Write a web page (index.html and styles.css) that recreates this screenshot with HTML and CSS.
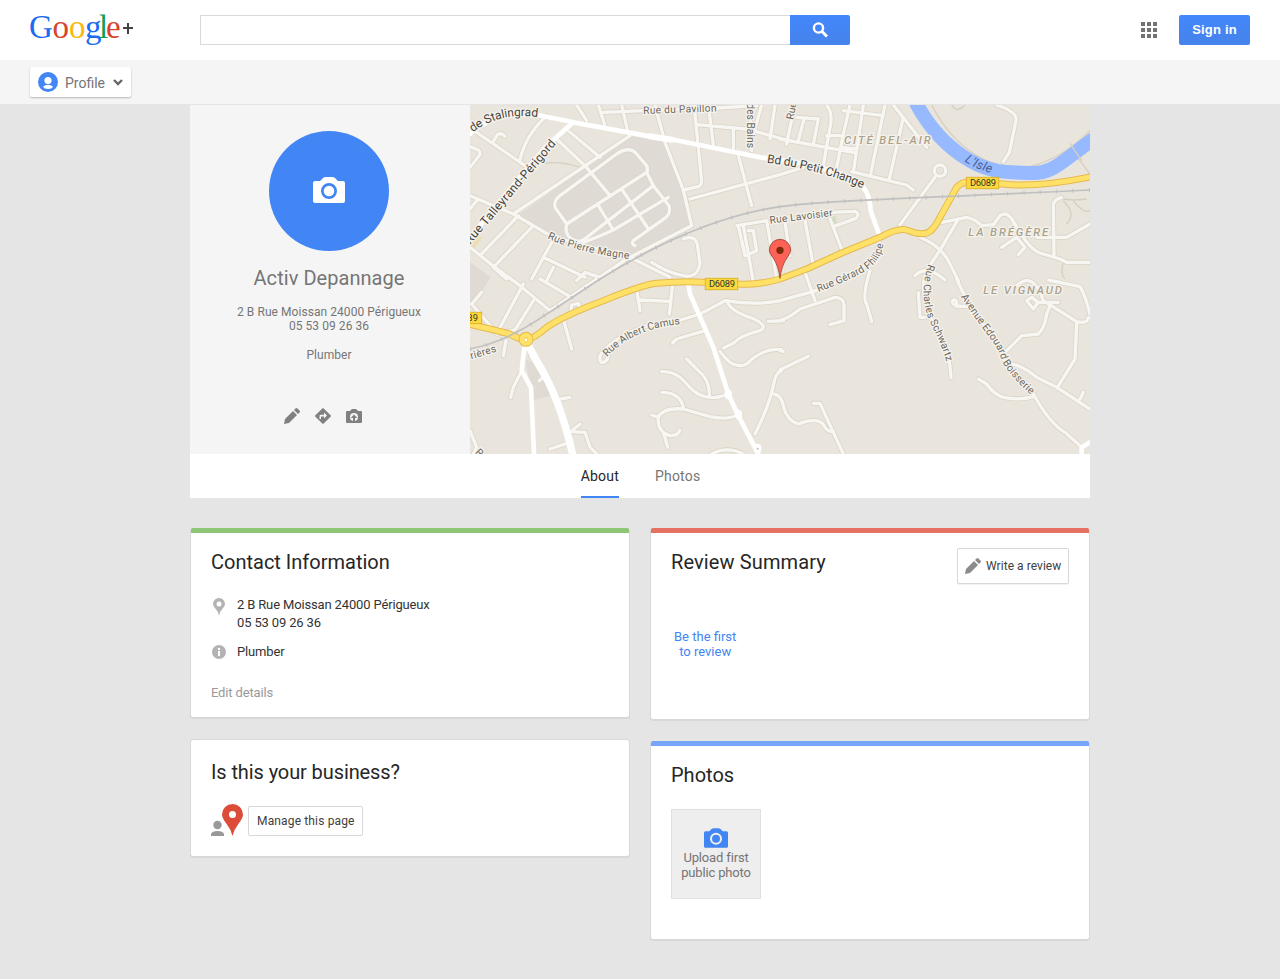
FILE: index.html
```html
<!DOCTYPE html>
<html lang="en">
<head>
    <meta charset="UTF-8">
    <meta name="viewport" content="width=device-width, initial-scale=1.0">
    <title>Activ Depannage - Google+</title>
    <link rel="stylesheet" href="styles.css">
</head>
<body>
    <!-- shared icons -->
    <svg class="sprite" width="0" height="0">
        <symbol id="icon-camera" viewBox="0 0 32 26">
            <path fill-rule="evenodd" d="M2 4h5l3-3q1-1 3-1h6q2 0 3 1l3 3h5q2 0 2 2v18q0 2-2 2H2q-2 0-2-2V6q0-2 2-2zM16 6a8 8 0 1 0 0 16a8 8 0 1 0 0-16zm0 2.7a5.3 5.3 0 1 1 0 10.6a5.3 5.3 0 1 1 0-10.6z"/>
        </symbol>
        <symbol id="icon-pencil" viewBox="0 0 16 16">
            <path d="M0 16l1-5 8-8 4 4-8 8zM10 2l1.500-1.500q1-1 2 0l2 2q1 1 0 2L14 6z"/>
        </symbol>
    </svg>

    <header class="header">
        <a class="logo" href="#">
            <svg width="110" height="46" viewBox="-2 -5 110 46">
                <text y="26"><tspan class="g-blue" x="-1">G</tspan><tspan class="g-red" x="22.500">o</tspan><tspan class="g-yellow" x="39">o</tspan><tspan class="g-blue" x="55">g</tspan><tspan class="g-green" x="69">l</tspan><tspan class="g-red" x="76">e</tspan></text>
                <path d="M97 11h2v4h4v2h-4v5h-2v-5h-4v-2h4z" fill="#444"/>
            </svg>
        </a>
        <form class="search">
            <input type="text" class="search-input" aria-label="Search">
            <button type="button" class="search-button" aria-label="Search">
                <svg width="16" height="16" viewBox="0 0 16 16" fill="none" stroke="#fff">
                    <circle cx="6.500" cy="6" r="4.600" stroke-width="2.400"/>
                    <path d="M10 9.500l5 5" stroke-width="3"/>
                </svg>
            </button>
        </form>
        <div class="header-right">
            <svg width="16" height="16" viewBox="0 0 16 16" fill="#737373">
                <path d="M0 0h4v4H0zM6 0h4v4H6zM12 0h4v4h-4zM0 6h4v4H0zM6 6h4v4H6zM12 6h4v4h-4zM0 12h4v4H0zM6 12h4v4H6zM12 12h4v4h-4z"/>
            </svg>
            <a class="sign-in" href="#">Sign in</a>
        </div>
    </header>

    <nav class="subnav">
        <button type="button" class="profile-menu">
            <svg width="20" height="20" viewBox="0 0 20 20">
                <circle cx="10" cy="10" r="10" fill="#4285f4"/>
                <circle cx="10" cy="8.500" r="3.600" fill="#fff"/>
                <path d="M5 14.500q5-3.500 10 0q-1 2.500-5 2.500t-5-2.500z" fill="#fff"/>
            </svg>
            <span>Profile</span>
            <svg width="10" height="7" viewBox="0 0 10 7"><path d="M1 1l4 4 4-4" fill="none" stroke="#666" stroke-width="2.400"/></svg>
        </button>
    </nav>

    <main class="page">
        <section class="cover">
            <div class="profile">
                <div class="avatar">
                    <svg width="32" height="26"><use href="#icon-camera"/></svg>
                </div>
                <h1>Activ Depannage</h1>
                <p class="address">2 B Rue Moissan 24000 Périgueux<br>05 53 09 26 36</p>
                <p class="category">Plumber</p>
                <div class="actions">
                    <svg width="16" height="16"><use href="#icon-pencil"/></svg>
                    <svg width="16" height="16" viewBox="0 0 16 16">
                        <path fill-rule="evenodd" d="M7.300.4q.7-.7 1.400 0l6.900 6.900q.7.700 0 1.400l-6.900 6.900q-.7.700-1.400 0L.4 8.700q-.7-.7 0-1.400zM6 11V8.500h3v2L12 7.500l-3-3V6.800H5.500Q4.500 6.800 4.500 8V11z"/>
                    </svg>
                    <svg width="16" height="14" viewBox="0 0 16 14">
                        <path fill-rule="evenodd" d="M1 2h3l1.300-1.500Q5.700 0 6.500 0h3q.8 0 1.200.5L12 2h3q1 0 1 1v10q0 1-1 1H1q-1 0-1-1V3q0-1 1-1zM7 12V9H4.700L8 5.500 11.300 9H9v3q3-.7 3-4a4 4 0 0 0-8 0q0 3.300 3 4z"/>
                    </svg>
                </div>
            </div>
            <svg class="map" width="620" height="349" viewBox="0 3 1860 1047">
                <defs>
                    <g id="streets">
                        <path d="M20 85L165 185M0 128L25 138Q35 148 25 158L0 190M70 112L82 92Q95 85 105 97M230 35Q165 95 150 168M260 105L345 185L420 275M295 80L390 160M130 330L480 95M0 275L130 330L250 400L480 460L600 520M20 290L0 315M145 335L30 455M185 370L70 490M0 430L75 490L150 545L240 620L470 465L665 365L640 258L585 115L555 3"/>
                        <path d="M320 3L350 50M385 3L405 65M455 3L475 90M400 25L520 20L740 12L860 5M672 3L685 130L695 232Q695 243 685 248L640 258M715 3L730 122M680 62L830 75L950 108M790 72L790 138M840 3L845 140M875 3L850 92M915 3L900 105M660 285L930 212L1000 190M805 155L845 305"/>
                        <path d="M290 360L255 310Q250 290 270 275L440 150Q480 125 500 150L530 185Q535 198 530 205L290 360M530 205L550 245L597 305Q603 325 588 340L490 410Q482 420 495 425M290 360Q282 390 305 405Q330 420 350 400L550 245M455 255L535 375M385 305L430 378M340 415Q370 405 430 378L595 280"/>
                        <path d="M245 415L185 525M220 460L345 520M250 490L230 530M110 525L70 490M320 530L345 505L390 520M640 405Q675 392 682 420L690 480Q680 525 640 515Q590 505 545 475M800 365L890 350M805 365L825 455L860 440L850 380L835 380M820 365L850 535M890 350L920 525M945 355L960 455M1005 350L1028 475M1005 505L1035 590"/>
                        <path d="M975 3L960 70L950 120M930 105L1150 145M980 40L1045 45L1030 120M1002 45L985 110M1070 3Q1090 30 1080 70L1060 185M1140 3L1120 90L1100 190M1180 3L1150 205M1245 3L1202 210M1120 20L1240 35M1070 95L1110 95M1110 130L1160 135M1300 40L1258 225M1270 3L1370 130M1145 203L1310 243L1330 258M1290 362L1395 220"/>
                        <circle cx="1410" cy="200" r="17"/>
                        <path d="M1085 325L1155 322Q1172 330 1158 343L1090 368M1080 345L1115 435M1580 3Q1645 25 1638 50L1618 145L1600 173M1400 358L1490 340Q1515 345 1535 365L1570 362L1590 335Q1608 322 1625 345L1650 385Q1680 435 1710 447L1770 465L1790 475L1860 475M1595 430L1640 400L1665 430L1645 452M1752 452L1750 300Q1755 285 1775 280M1700 400L1790 400L1860 360M1350 400Q1410 425 1435 470L1465 530M1465 345L1415 430L1370 500"/>
                        <path d="M1228 405Q1230 450 1180 490Q1130 525 1030 562L930 590Q860 605 765 590L690 630L625 650Q480 660 400 740Q382 762 394 775Q410 778 415 755M930 650Q960 640 990 615L1095 580Q1122 580 1122 605L1122 650L1080 662M1200 500Q1175 580 1190 600L1205 653M1345 565L1350 640L1365 640M1380 490Q1355 520 1362 570Q1370 640 1410 690Q1440 750 1443 820M1335 515Q1370 480 1425 528"/>
                        <path d="M1460 525Q1500 620 1590 720L1605 775Q1650 820 1690 870Q1740 960 1785 985L1835 1030M1605 745L1655 695L1705 690Q1725 670 1730 630L1740 605M1610 775Q1660 785 1700 820L1760 850L1860 915M1820 655L1815 765L1762 850M1640 545Q1690 500 1720 590L1820 653Q1855 660 1855 640M1735 528L1830 548Q1848 580 1860 630M1670 590L1690 615L1705 595L1685 580ZM1700 595L1765 595M1490 608L1458 606Q1440 595 1450 588Q1460 585 1460 600M1525 825L1550 840Q1570 870 1600 880Q1650 890 1690 878M1830 885L1840 865"/>
                        <path d="M930 797L1015 757M895 652L940 650M930 740L940 742M1030 898L1050 898L1090 985L1120 1050M855 990Q900 900 912 835Q918 805 935 800M910 870Q932 870 940 905Q950 950 985 960Q1050 935 1065 970Q1075 985 1090 982"/>
                        <path d="M35 565L5 600L65 670M160 540L85 680M190 590L135 678L80 690M210 525L295 575M280 645L305 735M303 618L305 603L325 598L330 612M500 555L510 620M510 588L600 592M608 540L598 630M705 680L620 705L608 717M770 590Q780 620 840 640Q900 665 870 680Q810 695 790 718L760 732M750 742Q790 800 830 780Q880 730 935 737M650 765L700 815Q720 840 718 880M575 803Q620 800 650 840Q700 900 770 872M575 865Q630 865 640 910"/>
                        <path d="M545 933L565 940Q580 910 640 915L720 938Q780 950 805 930M565 935Q560 985 600 995Q625 995 630 978M580 985L593 1030M725 1050Q770 1025 820 1050M155 800L130 850L122 880M270 885L300 880M182 755L220 820L208 830M108 710L100 755M300 985L330 960M300 983L345 985L360 1030L380 1050M240 1035L290 1018M0 980L20 1030L10 1050"/>
                    </g>
                    <g id="avenues">
                        <path d="M0 90Q80 15 215 35L310 55L540 97L600 105L870 160Q1130 190 1180 250Q1200 275 1202 320L1225 385"/>
                        <path d="M310 55L230 125L0 400M165 715L155 800L183 850L192 1050M655 535L660 570L730 730L775 870L805 935L865 1050M1835 1050L1835 1030L1860 1015"/>
                        <path d="M170 715L200 770Q270 880 310 1060" stroke-width="22"/>
                    </g>
                    <path id="d6089" d="M-5 660L60 675L120 690Q150 708 170 706Q190 705 230 670Q280 635 400 590Q520 542 560 538Q640 530 700 535L800 540Q860 545 930 525L1010 495L1115 447L1230 400Q1285 370 1310 378Q1360 398 1380 382Q1395 370 1410 340L1460 250Q1475 235 1490 235L1600 240Q1700 252 1865 218"/>
                    <path id="rail" d="M0 735Q100 715 200 650L390 525Q680 345 930 308C1050 290 1300 285 1860 258"/>
                    <path id="p-stalingrad" d="M8 85Q90 22 206 40"/>
                    <path id="p-talleyrand" d="M0 422L262 116"/>
                    <path id="p-magne" d="M232 403Q330 448 482 465"/>
                    <path id="p-camus" d="M411 759Q490 672 632 661"/>
                    <path id="p-change" d="M890 176Q1060 198 1184 256"/>
                    <path id="p-gerard" d="M1045 564Q1150 524 1190 498Q1245 462 1240 395"/>
                    <path id="p-schwartz" d="M1375 480Q1345 570 1378 650Q1420 730 1434 790"/>
                    <path id="p-boisserie" d="M1472 578Q1530 665 1570 715Q1588 742 1594 768Q1625 825 1695 882"/>
                    <path id="p-isle" d="M1483 172Q1520 198 1580 211"/>
                </defs>
                <rect y="3" width="1860" height="1047" fill="#e9e5dc"/>
                <path d="M150 330L480 95L590 115L665 365L480 460L240 400ZM0 475L62 520L30 570L0 600ZM165 765L200 780L245 875L190 888Z" fill="#dfdbd4"/>
                <path d="M0 400L10 390L38 400L15 432L0 430Z" fill="#ecdfb8"/>
                <path d="M1082 340L1097 335L1100 358L1088 362Z" fill="#cfdfc1"/>
                <!-- footpaths -->
                <path d="M180 185Q260 165 330 190M1385 3Q1440 110 1530 160T1690 185Q1780 160 1860 80M1445 3Q1460 30 1485 3M1800 130L1860 210M1780 285Q1810 290 1850 285M1780 290Q1820 330 1790 360M1810 290Q1840 330 1860 320M1780 475Q1770 510 1785 525" fill="none" stroke="#d5cfbf" stroke-width="4"/>
                <path d="M1337 -5C1385 85 1440 135 1500 170S1610 205 1685 207S1790 155 1910 78" fill="none" stroke="#96b9ff" stroke-width="42"/>
                <path d="M1800 118L1835 170" stroke="#d5cfbf" stroke-width="4"/>
                <g class="road">
                    <use href="#streets" stroke="#dad5c8" stroke-width="15"/>
                    <use href="#streets" stroke="#f8f6f2" stroke-width="10"/>
                    <use href="#avenues" stroke="#fff" stroke-width="14"/>
                    <path d="M540 97L605 107" stroke="#fff" stroke-width="18"/>
                    <use href="#d6089" stroke="#e5b84e" stroke-width="21"/>
                    <use href="#d6089" stroke="#ffe168" stroke-width="15"/>
                    <circle cx="168" cy="706" r="14" stroke="#e5b84e" stroke-width="17"/>
                    <circle cx="168" cy="706" r="13" stroke="#ffe168" stroke-width="13"/>
                    <circle cx="168" cy="708" r="4" fill="#fff"/>
                    <path d="M775 868v6M805 928v6M863 1030v8" stroke="#fff" stroke-width="22"/>
                    <circle cx="863" cy="1034" r="3" fill="#bbb"/>
                    <use href="#rail" stroke="#c0c0c0" stroke-width="5"/>
                    <use href="#rail" class="rail-ties" stroke="#c0c0c0" stroke-width="12"/>
                </g>
                <g class="street-names">
                    <text x="520" y="30" textLength="220" transform="rotate(-2 520 30)">Rue du Pavillon</text>
                    <text x="831" y="-2" textLength="134" transform="rotate(90 831 -2)">des Bains</text>
                    <text x="970" y="48" transform="rotate(-80 970 48)">Rue</text>
                    <text x="900" y="359" textLength="190" transform="rotate(-7 900 359)">Rue Lavoisier</text>
                    <text x="4" y="766" textLength="80" transform="rotate(-17 4 766)">rières</text>
                    <text x="14" y="1046" transform="rotate(45 14 1046)">R</text>
                    <text textLength="254"><textPath href="#p-magne">Rue Pierre Magne</textPath></text>
                    <text textLength="246"><textPath href="#p-camus">Rue Albert Camus</textPath></text>
                    <text textLength="256"><textPath href="#p-gerard">Rue Gérard Philipe</textPath></text>
                    <text textLength="307"><textPath href="#p-schwartz">Rue Charles Schwartz</textPath></text>
                    <text textLength="364"><textPath href="#p-boisserie">Avenue Edouard Boisserie</textPath></text>
                </g>
                <g class="street-names big">
                    <text textLength="206"><textPath href="#p-stalingrad">de Stalingrad</textPath></text>
                    <text textLength="398"><textPath href="#p-talleyrand">Rue Talleyrand-Périgord</textPath></text>
                    <text textLength="298"><textPath href="#p-change">Bd du Petit Change</textPath></text>
                </g>
                <g class="area-names">
                    <text x="1122" y="120" textLength="260">CITÉ BEL-AIR</text>
                    <text x="1495" y="396" textLength="240">LA BRÉGÈRE</text>
                    <text x="1540" y="571" textLength="236">LE VIGNAUD</text>
                </g>
                <text class="river-name" textLength="88"><textPath href="#p-isle">L'Isle</textPath></text>
                <g class="road-badges">
                    <rect x="1489" y="220" width="97" height="34"/>
                    <text x="1500" y="247" textLength="78">D6089</text>
                    <rect x="706" y="523" width="97" height="34"/>
                    <text x="717" y="550" textLength="78">D6089</text>
                    <rect x="-60" y="625" width="95" height="34"/>
                    <text x="-8" y="652" textLength="32">89</text>
                </g>
                <!-- business marker -->
                <path d="M930 523Q926 485 908 460Q898 448 898 438A32 32 0 0 1 962 438Q962 448 952 460Q934 485 930 523Z" fill="#fe6256" stroke="#7a2f25" stroke-width="2"/>
                <circle cx="930" cy="439" r="11" fill="#7c2a08"/>
            </svg>
        </section>

        <div class="tabs">
            <a class="tab active" href="#">About</a>
            <a class="tab" href="#">Photos</a>
        </div>

        <div class="columns">
            <div class="column">
                <section class="card contact">
                    <h2>Contact Information</h2>
                    <div class="info-row">
                        <svg width="16" height="18" viewBox="0 0 16 18"><path fill-rule="evenodd" d="M8 18Q7.500 13.500 4 10Q2 8 2 6A6 6 0 0 1 14 6Q14 8 12 10Q8.500 13.500 8 18zM8 3.500a2.500 2.500 0 1 0 0 5a2.500 2.500 0 1 0 0-5z"/></svg>
                        <p>2 B Rue Moissan 24000 Périgueux<br>05 53 09 26 36</p>
                    </div>
                    <div class="info-row">
                        <svg width="16" height="14" viewBox="0 0 16 14"><path fill-rule="evenodd" d="M8 0a7 7 0 1 0 0 14a7 7 0 1 0 0-14zM7 3h2v2H7zM7 6h2v5H7z"/></svg>
                        <p>Plumber</p>
                    </div>
                    <a class="edit-link" href="#">Edit details</a>
                </section>
                <section class="card business">
                    <h2>Is this your business?</h2>
                    <div class="manage">
                        <svg width="32" height="32" viewBox="0 0 32 32">
                            <circle cx="6.500" cy="21" r="4.200" fill="#999"/>
                            <path d="M0 32v-2q1-3 6.500-3t6.500 3v2z" fill="#999"/>
                            <path fill-rule="evenodd" d="M21.500 32Q20 25.500 15 19Q11 14 11 10.500A10.500 10.500 0 0 1 32 10.500Q32 14 28 19Q23 25.500 21.500 32zM21.500 7a3.500 3.500 0 1 0 0 7a3.500 3.500 0 1 0 0-7z" fill="#dd4b39"/>
                        </svg>
                        <button type="button" class="button">Manage this page</button>
                    </div>
                </section>
            </div>
            <div class="column">
                <section class="card reviews">
                    <div class="card-head">
                        <h2>Review Summary</h2>
                        <button type="button" class="button write-review">
                            <svg width="16" height="16"><use href="#icon-pencil"/></svg>
                            Write a review
                        </button>
                    </div>
                    <a class="first-review" href="#">Be the first<br>to review</a>
                </section>
                <section class="card photos">
                    <h2>Photos</h2>
                    <a class="upload" href="#">
                        <svg width="24" height="20"><use href="#icon-camera"/></svg>
                        <span>Upload first<br>public photo</span>
                    </a>
                </section>
            </div>
        </div>
    </main>
</body>
</html>
```
FILE: styles.css
```css
:root {
    --blue: #4285f4;
    --page-background: #e5e5e5;
    --border-color: #d8d8d8;
    --text-color: #262626;
    --text-muted: #757575;
}

* {
    margin: 0;
    padding: 0;
    box-sizing: border-box;
}

body {
    font-family: Roboto, Arial, sans-serif;
    background-color: var(--page-background);
    color: var(--text-color);
    font-size: 13px;
}

a {
    color: inherit;
    text-decoration: none;
}

button {
    font-family: inherit;
    cursor: pointer;
}

svg {
    display: block;
    flex: none;
}

.sprite {
    display: none;
}

/* Header */
.header {
    height: 60px;
    background-color: #fff;
    display: flex;
    align-items: center;
    padding: 0 30px 0 28px;
}

.logo {
    width: 172px;
    height: 46px;
}

.logo text {
    font-family: "Liberation Serif", serif;
    font-size: 33px;
}

.g-blue {
    fill: #1a6cf0;
}

.g-red {
    fill: #d8432e;
}

.g-yellow {
    fill: #fdb90b;
}

.g-green {
    fill: #0f9d58;
}

.search {
    display: flex;
    width: 650px;
}

.search-input {
    flex: 1;
    min-width: 0;
    height: 30px;
    border: 1px solid #d9d9d9;
    border-right: none;
    background-color: #fff;
}

.search-button {
    width: 60px;
    height: 30px;
    border: none;
    border-radius: 0 2px 2px 0;
    background: linear-gradient(#4387fd, #4683ea);
    display: flex;
    align-items: center;
    justify-content: center;
}

.header-right {
    margin-left: auto;
    display: flex;
    align-items: center;
    gap: 22px;
}

.sign-in {
    width: 71px;
    height: 30px;
    line-height: 30px;
    text-align: center;
    border-radius: 2px;
    background: linear-gradient(#4387fd, #4683ea);
    color: #fff;
    font-family: "Liberation Sans", Arial, sans-serif;
    font-size: 13px;
    font-weight: bold;
    letter-spacing: 0.2px;
}

.subnav {
    height: 45px;
    padding: 7px 30px;
    background-color: #f5f5f5;
    border-bottom: 1px solid var(--page-background);
}

.profile-menu {
    display: flex;
    align-items: center;
    width: 101px;
    height: 30px;
    padding: 0 8px;
    border: none;
    border-radius: 2px;
    background-color: #fff;
    box-shadow: 0 1px 2px rgba(0, 0, 0, 0.25);
    color: var(--text-muted);
    font-size: 14px;
}

.profile-menu span {
    margin: 2px 8px 0 7px;
}

/* Cover */
.page {
    width: 900px;
    margin: 0 auto;
}

.cover {
    display: flex;
    height: 349px;
}

.profile {
    width: 280px;
    padding: 26px 2px 0 0;
    background-color: #f5f5f5;
    color: var(--text-muted);
    font-size: 12px;
    text-align: center;
    display: flex;
    flex-direction: column;
    align-items: center;
}

.avatar {
    width: 120px;
    height: 120px;
    padding-bottom: 2px;
    border-radius: 50%;
    background-color: var(--blue);
    fill: #fff;
    display: flex;
    align-items: center;
    justify-content: center;
}

.profile h1 {
    margin-top: 15px;
    font-size: 20px;
    font-weight: 400;
    line-height: 24px;
    letter-spacing: 0.05px;
}

.address,
.category {
    line-height: 14px;
    letter-spacing: 0.06px;
}

.address {
    margin-top: 15px;
}

.category {
    margin-top: 15px;
}

.actions {
    display: flex;
    align-items: center;
    gap: 15px;
    margin: 46px 12px 0 0;
    fill: #808080;
}

.map {
    overflow: hidden;
}

.road {
    fill: none;
    stroke-linecap: round;
    stroke-linejoin: round;
}

.rail-ties {
    stroke-dasharray: 3 46;
    stroke-linecap: butt;
}

.street-names text,
.area-names text {
    paint-order: stroke;
    stroke: #f5f2ec;
    stroke-width: 8px;
    stroke-linejoin: round;
}

.street-names {
    fill: #6b675c;
    font-size: 31px;
}

.big {
    fill: #45423b;
    font-size: 36px;
}

.area-names {
    fill: #aaa28c;
    font-size: 34px;
    font-style: italic;
    font-weight: 500;
}

.river-name {
    fill: #4a5f94;
    font-size: 38px;
    font-style: italic;
}

.road-badges rect {
    fill: #fcd93a;
    stroke: #e0b42c;
    stroke-width: 3px;
}

.road-badges text {
    fill: #333;
    font-size: 28px;
}

/* Tabs */
.tabs {
    display: flex;
    justify-content: center;
    gap: 36px;
    height: 44px;
    padding-left: 1px;
    background-color: #fff;
    font-size: 14px;
}

.tab {
    height: 44px;
    line-height: 45px;
    color: var(--text-muted);
    letter-spacing: 0.2px;
}

.tab.active {
    color: var(--text-color);
    border-bottom: 2px solid var(--blue);
}

/* Cards */
.columns {
    display: flex;
    align-items: flex-start;
    gap: 22px;
    padding: 30px 1px 39px;
}

.column {
    flex: 1;
    display: flex;
    flex-direction: column;
    gap: 22px;
}

.card {
    background-color: #fff;
    border-top: 5px solid #fff;
    border-radius: 2px;
    box-shadow: 0 1px 0 1px var(--border-color);
    padding: 17px 20px 0;
}

.card h2 {
    font-size: 20px;
    font-weight: 400;
    line-height: 24px;
}

.contact {
    height: 189px;
    border-top-color: #8fc675;
    margin-bottom: 1px;
    letter-spacing: -0.15px;
}

.contact h2 {
    margin-bottom: 22px;
    letter-spacing: 0;
}

.reviews {
    height: 191px;
    border-top-color: #e57162;
}

.reviews h2 {
    letter-spacing: 0.12px;
}

.photos {
    height: 198px;
    border-top-color: #77a5fb;
}

.business {
    height: 116px;
    border-top: none;
    padding-top: 20px;
    box-shadow: 0 1px 0 1px var(--border-color), 0 0 0 1px var(--border-color);
}

.business h2 {
    letter-spacing: -0.1px;
}

.info-row {
    display: flex;
    gap: 10px;
    line-height: 18px;
}

.info-row svg {
    fill: #b3b3b3;
    margin-top: 2px;
}

.info-row p {
    color: #333;
}

.contact .info-row + .info-row {
    margin-top: 11px;
}

.edit-link {
    display: inline-block;
    margin-top: 23px;
    line-height: 18px;
    color: #999;
}

.manage {
    display: flex;
    align-items: center;
    gap: 5px;
    margin-top: 20px;
}

.button {
    height: 30px;
    padding: 0 8px;
    border: 1px solid var(--border-color);
    border-radius: 2px;
    background-color: #fff;
    color: #404040;
    font-size: 12px;
    letter-spacing: 0.15px;
}

.manage .button {
    width: 115px;
    margin-top: 2px;
    white-space: nowrap;
}

.card-head {
    display: flex;
    justify-content: space-between;
}

.write-review {
    display: flex;
    align-items: center;
    gap: 5px;
    width: 112px;
    height: 36px;
    padding: 0 7px;
    margin-top: -2px;
    white-space: nowrap;
    letter-spacing: 0.05px;
    box-shadow: 0 1px 0 rgba(0, 0, 0, 0.05);
}

.write-review svg {
    fill: #8c8c8c;
}

.first-review {
    display: inline-block;
    margin: 45px 0 0 3px;
    line-height: 15px;
    text-align: center;
    color: var(--blue);
}

.upload {
    display: flex;
    flex-direction: column;
    align-items: center;
    width: 90px;
    height: 90px;
    margin-top: 22px;
    padding-top: 18px;
    border: 1px solid #e0e0e0;
    background-color: #eee;
    color: var(--text-muted);
    line-height: 15px;
    letter-spacing: -0.15px;
    text-align: center;
}

.upload svg {
    fill: var(--blue);
    margin-bottom: 2px;
}
```
